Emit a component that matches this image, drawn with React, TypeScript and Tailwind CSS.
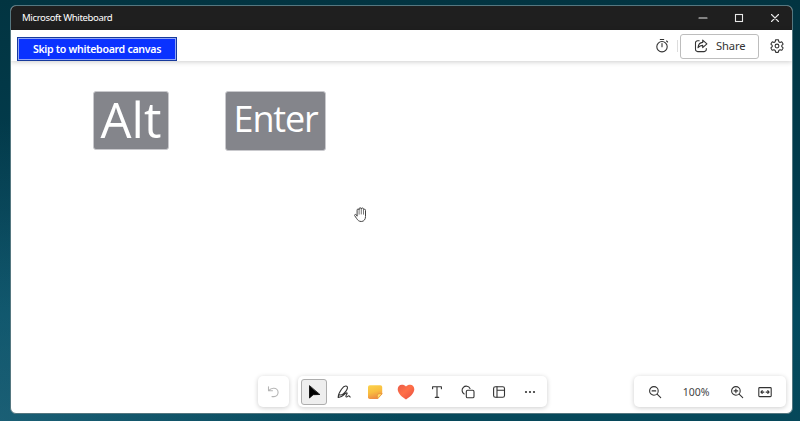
import type { ReactNode } from "react";

function Icon({ children, className = "h-4 w-4" }: { children: ReactNode; className?: string }) {
  return (
    <svg
      viewBox="0 0 16 16"
      className={"block shrink-0 " + className}
      fill="none"
      stroke="#333333"
      strokeWidth="1.1"
      strokeLinecap="round"
      strokeLinejoin="round"
    >
      {children}
    </svg>
  );
}

function TitleBar() {
  return (
    <div className="flex h-[24px] shrink-0 items-center bg-[#1f1f1f] pr-px pl-[11px] text-white">
      <span className="text-[9.6px] leading-6 tracking-[-0.38px] whitespace-nowrap">Microsoft Whiteboard</span>
      <div className="ml-auto -mr-[2px] flex">
        <button className="flex h-6 w-9 items-center justify-center">
          <Icon>
            <path d="M4 8h8" stroke="#e8e8e8" />
          </Icon>
        </button>
        <button className="flex h-6 w-9 items-center justify-center">
          <Icon>
            <rect x="4.5" y="4.5" width="7" height="7" stroke="#e8e8e8" strokeLinejoin="miter" />
          </Icon>
        </button>
        <button className="flex h-6 w-9 items-center justify-center">
          <Icon>
            <path d="M4.500 4.500l7 7M11.500 4.500l-7 7" stroke="#e8e8e8" />
          </Icon>
        </button>
      </div>
    </div>
  );
}

function Header() {
  return (
    <div className="flex h-[31px] shrink-0 items-center bg-white pl-[6px] shadow-[0_1px_5px_rgba(0,0,0,0.2)]">
      <button className="mt-[7px] flex h-6 w-[160px] items-center justify-center border border-[#173a9c] bg-[#0a32ff] pt-[2px] text-[10.6px] font-semibold tracking-[-0.3px] whitespace-nowrap text-white outline-1 -outline-offset-2 outline-[#93a6f5]">
        Skip to whiteboard canvas
      </button>
      <div className="ml-auto flex items-center pt-px pr-[7px]">
        <Icon className="mr-[-1px] h-4 w-4">
          <circle cx="8" cy="8.700" r="5.200" />
          <path d="M8 5.500v3.200M6.300 1.500h3.400M12.600 3l1 1" />
        </Icon>
        <div className="ml-[8px] h-3 w-px bg-[#dddddd]" />
        <button className="ml-[2px] flex h-[25px] w-[79px] items-center rounded-[3px] border border-[#bdbdbd] pl-[12px]">
          <Icon>
            <path d="M6.200 2.800H4.600A2.100 2.100 0 0 0 2.500 4.900v6.600a2.100 2.100 0 0 0 2.100 2.100h6.600a2.100 2.100 0 0 0 2.100-2.100v-1" />
            <path d="M9.700 2.200v2.200C6.900 4.600 5.300 6.500 5 9.700c1.300-1.600 2.800-2.300 4.700-2.300v2.200l4.200-3.700z" />
          </Icon>
          <span className="ml-[7px] text-[11.2px] tracking-[-0.1px] text-[#333333]">Share</span>
        </button>
        <Icon className="ml-[10px] h-4 w-4">
          <path d="M6.600 1.900Q8 1.500 9.400 1.900L9.800 3.700L11.000 4.400L12.700 3.800Q13.700 4.900 14.100 6.200L12.800 7.400V8.700L14.100 9.900Q13.700 11.200 12.700 12.300L11.000 11.700L9.800 12.400L9.400 14.200Q8 14.600 6.600 14.200L6.200 12.400L5.000 11.700L3.300 12.300Q2.300 11.200 1.900 9.900L3.200 8.700V7.400L1.900 6.200Q2.300 4.900 3.300 3.800L5.000 4.400L6.200 3.700Z" />
          <circle cx="8" cy="8.050" r="1.900" />
        </Icon>
      </div>
    </div>
  );
}

function HandCursor() {
  return (
    <svg viewBox="0 0 16 18" className="h-[18px] w-4" fill="white" stroke="#444444" strokeWidth="1" strokeLinecap="round" strokeLinejoin="round">
      <path d="M4.100 9.800V4.200a1 1 0 0 1 2-.3V3a1.100 1.100 0 0 1 2.200-.2V3a1.100 1.100 0 0 1 2.200.2v.9a1 1 0 0 1 2 .3V10.500c0 2.500-1.300 5-4.200 5-2.300 0-3.600-1.300-4.600-2.900L1.700 9.700c-.6-.9.600-1.800 1.400-1.100z" />
      <path d="M6.100 4v4.200M8.300 3.200v4.800M10.500 3.700v4.500" fill="none" stroke="#777777" />
    </svg>
  );
}

function Canvas() {
  return (
    <div className="flex min-h-0 grow flex-col">
      <div className="flex pt-[30px] pl-[82px]">
        <kbd className="flex h-[59px] w-[76px] items-center justify-center rounded-[3px] border border-[#c9c9cd] bg-[#84858b] font-['Open_Sans','Noto_Sans',sans-serif] text-[49px] leading-none text-white">
          <span className="pb-[3px]">Alt</span>
        </kbd>
        <kbd className="ml-[56px] flex h-[60px] w-[101px] items-center justify-center rounded-[3px] border border-[#c9c9cd] bg-[#84858b] font-['Open_Sans','Noto_Sans',sans-serif] text-[36px] leading-none text-white">
          <span className="pb-[5px] tracking-[-1.2px]">Enter</span>
        </kbd>
      </div>
      <div className="mt-[55px] ml-[342px]">
        <HandCursor />
      </div>
    </div>
  );
}

const panel = "flex h-[31px] items-center rounded-[5px] bg-white shadow-[0_1px_5px_rgba(0,0,0,0.2)]";

function Tool({ children }: { children: ReactNode }) {
  return <button className="flex h-[26px] w-[31px] shrink-0 items-center justify-center">{children}</button>;
}

function Toolbar() {
  return (
    <div className="mb-[6px] flex shrink-0 pl-[246.5px]">
      <div className={panel + " w-[31px] justify-center"}>
        <Icon>
          <path d="M3.500 2.800v4h4M3.700 6.600C5.200 4.700 7 4.100 8.800 4.200a4.200 4.200 0 0 1 .2 8.400H7" stroke="#b5b5b5" />
        </Icon>
      </div>
      <div className={panel + " ml-[9px] w-[249px]"}>
        <button className="ml-[3px] flex h-[26px] w-[26px] shrink-0 items-center justify-center rounded-[3px] border border-[#adadad] bg-[#eeeeee]">
          <Icon>
            <path d="M3.500 2v12l3.700-3.300 6.300-.2z" fill="#000000" stroke="#000000" strokeWidth="0.800" />
          </Icon>
        </button>
        <div className="ml-[2px] flex">
          <Tool>
            <Icon>
              <path d="M2.200 13.400C2.200 11 3.500 8 5.500 5.200 7.200 2.800 9.200 1.500 10.700 2.200c1.500.8.700 3-.700 4.900-1.700 2.300-4 4.300-6.400 3.800M2.200 13.400c2.800.3 5.500-2.300 7.400-4 1.400-1.200 2-.5 1.300.6-.8 1.400-1.500 2.600-.6 3 1 .4 1.700-1.300 2.500-1.200.8.100.4 1.200 1.500 1.200" />
            </Icon>
          </Tool>
          <Tool>
            <svg viewBox="0 0 16 16" className="h-4 w-4">
              <defs>
                <linearGradient id="note" x1="0" y1="0" x2="0.300" y2="1">
                  <stop stopColor="#fbd34d" />
                  <stop offset="0.550" stopColor="#f9be3f" />
                  <stop offset="1" stopColor="#ee8d43" />
                </linearGradient>
              </defs>
              <path d="M2.800 1.200h10.600q1.800 0 1.800 1.800v7l-4.800 5H2.800Q1 15 1 13.200V3q0-1.800 1.800-1.800z" fill="url(#note)" />
              <path d="M15.200 9.700h-3.100q-1.700 0-1.700 1.700V15z" fill="#ffdf67" stroke="#e58d37" strokeWidth="0.700" />
            </svg>
          </Tool>
          <Tool>
            <svg viewBox="0 0 18 16" className="h-4 w-[18px]">
              <defs>
                <linearGradient id="heart" x1="0" y1="0" x2="1" y2="1">
                  <stop stopColor="#e95b49" />
                  <stop offset="0.450" stopColor="#ff7048" />
                  <stop offset="1" stopColor="#e64d42" />
                </linearGradient>
              </defs>
              <path d="M9 15.500C5.500 13.500.7 9.500.7 5.300.7 2.600 2.500.8 4.800.8 6.700.8 8 1.300 9 2.600 10 1.300 11.300.8 13.200.8c2.300 0 4.100 1.800 4.100 4.500 0 4.200-4.800 8.200-8.300 10.200z" fill="url(#heart)" />
            </svg>
          </Tool>
          <Tool>
            <Icon>
              <path d="M3.600 4.800V2.700h8.800v2.100M8 2.700v10.700M6.300 13.400h3.400" />
            </Icon>
          </Tool>
          <Tool>
            <Icon>
              <path d="M4.200 10A4.200 4.200 0 1 1 10 4.400" />
              <rect x="6.300" y="6.300" width="7.700" height="7.500" rx="1.400" />
            </Icon>
          </Tool>
          <Tool>
            <Icon>
              <rect x="2.600" y="2.700" width="10.900" height="10.600" rx="1.800" />
              <path d="M6 2.700v10.600M6 6.300h7.500" />
            </Icon>
          </Tool>
          <Tool>
            <Icon>
              <circle cx="4" cy="8" r="1.100" fill="#333333" stroke="none" />
              <circle cx="8" cy="8" r="1.100" fill="#333333" stroke="none" />
              <circle cx="12" cy="8" r="1.100" fill="#333333" stroke="none" />
            </Icon>
          </Tool>
        </div>
      </div>
      <div className={panel + " ml-[87.5px] w-[152px] pl-[13px]"}>
        <Icon>
          <circle cx="6.900" cy="6.900" r="4.300" />
          <path d="M10.100 10.100l3.600 3.600M5.100 6.900h3.600" />
        </Icon>
        <span className="ml-[14px] w-[38px] pt-[2px] text-center text-[10.5px] text-[#444444]">100%</span>
        <Icon className="ml-[14px] h-4 w-4">
          <circle cx="6.900" cy="6.900" r="4.300" />
          <path d="M10.100 10.100l3.600 3.600M5.100 6.900h3.600M6.900 5.100v3.600" />
        </Icon>
        <Icon className="ml-[12px] h-4 w-4">
          <rect x="1.800" y="3.600" width="12.400" height="9" rx="0.800" />
          <path d="M3.900 8.100h3M5.200 6.700L3.900 8.100l1.300 1.400M12.100 8.100h-3M10.800 6.700l1.300 1.400-1.300 1.400" />
        </Icon>
      </div>
    </div>
  );
}

export default function App() {
  return (
    <div className="h-[421px] w-[800px] overflow-hidden bg-[radial-gradient(ellipse_400px_300px_at_0_100%,rgba(40,110,135,0.6),rgba(40,110,135,0)),linear-gradient(180deg,#023441_0%,#023e50_50%,#034a5e_75%,#06485a_100%)] pt-[5px] pl-[10px] font-['Noto_Sans','Open_Sans',sans-serif]">
      <div className="flex h-[409px] w-[783px] flex-col overflow-hidden rounded-[6px] border border-[#557780] bg-white">
        <TitleBar />
        <Header />
        <Canvas />
        <Toolbar />
      </div>
    </div>
  );
}
